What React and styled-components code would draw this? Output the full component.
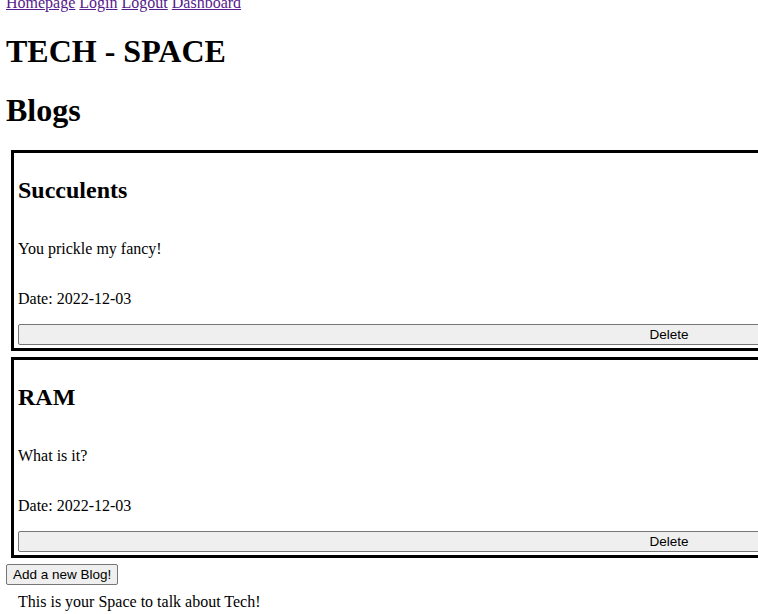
// App.jsx
import React from 'react';
import styled, { createGlobalStyle } from 'styled-components';

const blogs = [
  { id: 1, title: 'Succulents', body: 'You prickle my fancy!', date: '2022-12-03' },
  { id: 2, title: 'RAM', body: 'What is it?', date: '2022-12-03' },
];

const App = () => (
  <>
    <GlobalStyle />
    <Page>
      <Nav>
        <NavLink href="#">Homepage</NavLink> <NavLink href="#">Login</NavLink>{' '}
        <NavLink href="#">Logout</NavLink> <NavLink href="#">Dashboard</NavLink>
      </Nav>
      <Title>TECH - SPACE</Title>
      <Title>Blogs</Title>
      <BlogList>
        {blogs.map((blog) => (
          <BlogCard key={blog.id}>
            <BlogTitle>{blog.title}</BlogTitle>
            <BlogText>{blog.body}</BlogText>
            <BlogText>Date: {blog.date}</BlogText>
            <Button $wide>Delete</Button>
          </BlogCard>
        ))}
      </BlogList>
      <Button>Add a new Blog!</Button>
      <Footer>This is your Space to talk about Tech!</Footer>
    </Page>
  </>
);

const GlobalStyle = createGlobalStyle`
  html, body {
    margin: 0;
    overflow: hidden;
    background: #fff;
  }
  body {
    font-family: "Liberation Serif", "Times New Roman", serif;
    font-size: 16px;
    color: #000;
  }
`;

const Page = styled.div`
  padding: 0 6px;
`;

const Nav = styled.nav`
  margin-top: -6px;
  line-height: 18px;
`;

const NavLink = styled.a`
  color: #551a8b;
  text-decoration: underline;
`;

const Title = styled.h1`
  font-size: 32px;
  font-weight: bold;
  margin: 21.44px 0;
`;

const BlogList = styled.div`
  width: 1326px;
`;

const BlogCard = styled.div`
  display: flex;
  flex-direction: column;
  align-items: stretch;
  border: 3px solid #000;
  margin: 6px 5px;
  padding: 4px 4px 3px;
`;

const BlogTitle = styled.h2`
  font-size: 24px;
  font-weight: bold;
  margin: 19.92px 0;
`;

const BlogText = styled.p`
  margin: 16px 0;
`;

const Button = styled.button`
  display: block;
  align-self: ${({ $wide }) => ($wide ? 'stretch' : 'flex-start')};
  font-family: "Liberation Sans", Arial, sans-serif;
  font-size: 13.5px;
  color: #000;
  background-color: #efefef;
  border: 1px solid #767676;
  border-radius: 2px;
  padding: 1px 6px;
  height: 21px;
  cursor: pointer;
`;

const Footer = styled.p`
  margin: 8px 0 0;
  padding-left: 12px;
`;

export default App;
